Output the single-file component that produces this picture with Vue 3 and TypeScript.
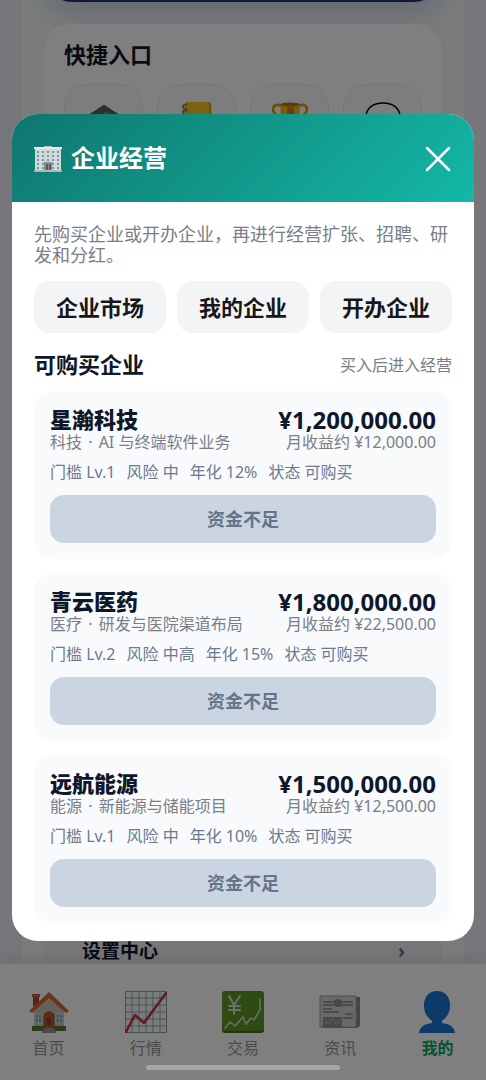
<script setup lang="ts">
import { ref } from 'vue'

interface Company {
  name: string
  sector: string
  intro: string
  price: string
  income: string
  facts: string[]
}

const companies: Company[] = [
  {
    name: '星瀚科技',
    sector: '科技',
    intro: 'AI 与终端软件业务',
    price: '¥1,200,000.00',
    income: '月收益约 ¥12,000.00',
    facts: ['门槛 Lv.1', '风险 中', '年化 12%', '状态 可购买'],
  },
  {
    name: '青云医药',
    sector: '医疗',
    intro: '研发与医院渠道布局',
    price: '¥1,800,000.00',
    income: '月收益约 ¥22,500.00',
    facts: ['门槛 Lv.2', '风险 中高', '年化 15%', '状态 可购买'],
  },
  {
    name: '远航能源',
    sector: '能源',
    intro: '新能源与储能项目',
    price: '¥1,500,000.00',
    income: '月收益约 ¥12,500.00',
    facts: ['门槛 Lv.1', '风险 中', '年化 10%', '状态 可购买'],
  },
]

const tabs = ['企业市场', '我的企业', '开办企业']
const open = ref(true)
</script>

<template>
  <div class="app">
    <main class="page">
      <section class="profile"></section>
      <section class="panel quick">
        <h2>快捷入口</h2>
        <div class="tiles">
          <button type="button" class="tile" aria-label="学院">
            <svg viewBox="0 0 40 40"><path d="M20 3 L39 15 L20 26 L1 15Z" fill="#5c5f63" /><path d="M20 11 L31 16" stroke="#8a8d90" stroke-width="1.5" /><path d="M8 20v10q12 8 24 0V20L20 27Z" fill="#484a4d" /></svg>
          </button>
          <button type="button" class="tile" aria-label="账本">
            <svg viewBox="0 0 40 40"><rect x="7" y="0" width="28" height="38" rx="3" fill="#d89a12" /><rect x="8" y="0" width="25" height="36" rx="3" fill="#fbc42a" /><g fill="none" stroke="#98761d" stroke-width="1.5"><path d="M10 3H6q-2 2 0 4h4M10 9H6q-2 2 0 4h4M10 15H6q-2 2 0 4h4" /></g></svg>
          </button>
          <button type="button" class="tile" aria-label="排行">
            <svg viewBox="0 0 40 40"><path d="M11 4C1 0 0 10 6 14l7 4M29 4c10-4 11 6 5 10l-7 4" fill="none" stroke="#e09b16" stroke-width="3" /><path d="M10 2h20v10q-1 12-10 12T10 12Z" fill="#f7b71d" /><ellipse cx="20" cy="2.500" rx="10" ry="2" fill="#b97412" /><rect x="17" y="5" width="7" height="9" fill="#c97f14" /><path d="M18 23h4v7h6v6H12v-6h6Z" fill="#c97f14" /></svg>
          </button>
          <button type="button" class="tile" aria-label="消息">
            <svg viewBox="0 0 40 40"><path d="M20 1C9 1 2 7 2 16s7 14 15 14l-2 7 10-8c8-2 13-7 13-13C38 7 31 1 20 1Z" fill="none" stroke="#000" stroke-width="1.500" /></svg>
          </button>
        </div>
      </section>
      <section class="settings">
        <a href="#settings"><span>设置中心</span><span class="chevron">›</span></a>
      </section>
    </main>

    <nav class="nav">
      <a href="#home">
        <svg viewBox="0 0 42 42"><path d="M5 5h6v10H5Z" fill="#a34d35" /><path d="M6 19 21 5 36 19v20H6Z" fill="#c9c3b4" /><path d="M21 1 1 20l3 2L21 7l17 15 3-2Z" fill="#d5652e" /><path d="M4 3h8v3H4Z" fill="#c95d31" /><path d="M7 23h7v9H7ZM28 23h7v9h-7Z" fill="#7fa9b5" stroke="#e2e2e2" /><path d="M10.500 23v9M7 27h7M31.500 23v9M28 27h7" stroke="#e2e2e2" /><path d="M16 38V26q0-5 5-5t5 5v12Z" fill="#b75b32" stroke="#8a4021" /><path d="M19 28q0-4 4 0v6h-4Z" fill="#8a4021" /><path d="M4 35h12v5H4ZM26 35h12v5H26Z" fill="#577b28" /><path d="M16 37h10v2h2v3H14v-3h2Z" fill="#9b9390" /></svg>
        <span>首页</span>
      </a>
      <a href="#market">
        <svg viewBox="0 0 42 42"><rect x="0.500" y="0.500" width="41" height="41" fill="#f6f8f8" stroke="#8aa0a2" /><path d="M7 0v42M14 0v42M21 0v42M28 0v42M35 0v42M0 7h42M0 14h42M0 21h42M0 28h42M0 35h42" stroke="#93a8aa" stroke-width="1" /><path d="M1 41 10 24l9 8L41 2" fill="none" stroke="#c92f42" stroke-width="2.500" stroke-linejoin="round" stroke-linecap="round" /></svg>
        <span>行情</span>
      </a>
      <a href="#trade">
        <svg viewBox="0 0 42 42"><rect width="42" height="42" rx="3" fill="#5f9629" /><path d="M0 38q0 4 4 4h34q4 0 4-4v-1q0 3-4 3H4q-4 0-4-3Z" fill="#416f18" /><g fill="none" stroke="#d5e5c8" stroke-linecap="round"><path d="m7 5 5 9 6-9M12 14v9M7 15h11M7 19h11" stroke-width="2" /><path d="m3 37 5-6 5 4 8-9 3 7 5-6 3 2 6-10V8" stroke-width="1.500" /></g></svg>
        <span>交易</span>
      </a>
      <a href="#news">
        <svg viewBox="0 0 42 42"><path d="M37 6h4v29l-3 2H4l-3-2Z" fill="#8b8b8b" /><path d="M1 5h36v31H1Z" fill="#d3d3d3" stroke="#a2a2a2" /><g stroke="#858585" stroke-width="1.500"><path d="M4 11h30M4 14h30M4 18h9M4 21h16M26 23h8M24 27h10" /></g><circle cx="19" cy="12" r="4" fill="#909090" /><path d="M4 26h19v10H4Z" fill="#909090" /><path d="m5 28 4 4 5-4 3 4 5-4M5 33l5-2 4 3 4-3 4 2" stroke="#b9b9b9" fill="none" /></svg>
        <span>资讯</span>
      </a>
      <a href="#mine" class="active">
        <svg viewBox="0 0 42 42"><path d="M21 0C13 0 8 6 8 14c0 8 3 12 8 16v2c-7 1-12 3-13 10h36c-1-7-6-9-13-10v-2c5-4 8-8 8-16C34 6 29 0 21 0Z" fill="#1b75d0" /></svg>
        <span>我的</span>
      </a>
    </nav>

    <div v-if="open" class="overlay">
      <section class="dialog" role="dialog" aria-modal="true" aria-labelledby="dialog-title">
        <header>
          <svg class="building" viewBox="0 0 28 28"><path d="M10 1h8v3h-8Z" fill="#a9bdbb" /><path d="M1 3h26v22H1Z" fill="#d3d8d8" /><path d="M0 2h28v2H0Z" fill="#e6eaea" /><g stroke="#6f9ba6" stroke-width="2" stroke-dasharray="2 2"><path d="M4 6v18M9 6v18M14 6v10M19 6v18M24 6v18" /></g><path d="M10 17h8v9h-8Z" fill="#8d8c91" /><path d="M12 19h2v7h-2ZM15 19h2v7h-2Z" fill="#5e5762" /><path d="M0 25h28v2H0Z" fill="#b1b9b8" /></svg>
          <h1 id="dialog-title">企业经营</h1>
          <button type="button" class="close" aria-label="关闭" @click="open = false">
            <svg viewBox="0 0 28 28"><path d="M3 3 25 25M25 3 3 25" stroke="#fff" stroke-width="2.500" stroke-linecap="round" /></svg>
          </button>
        </header>
        <div class="body">
          <p class="intro">先购买企业或开办企业，再进行经营扩张、招聘、研发和分红。</p>
          <div class="tabs">
            <button v-for="tab in tabs" :key="tab" type="button">{{ tab }}</button>
          </div>
          <div class="heading">
            <h2>可购买企业</h2>
            <span>买入后进入经营</span>
          </div>
          <div class="list">
            <article v-for="company in companies" :key="company.name" class="card">
              <div class="row">
                <h3>{{ company.name }}</h3>
                <strong>{{ company.price }}</strong>
              </div>
              <div class="row sub">
                <span>{{ company.sector }} <span class="dot">·</span> {{ company.intro }}</span>
                <span>{{ company.income }}</span>
              </div>
              <div class="facts">
                <span v-for="fact in company.facts" :key="fact">{{ fact }}</span>
              </div>
              <button type="button" disabled>资金不足</button>
            </article>
          </div>
        </div>
      </section>
    </div>
    <div class="home-bar"></div>
  </div>
</template>

<style>
body {
  margin: 0;
}
</style>

<style scoped>
* {
  box-sizing: border-box;
}
.app {
  position: relative;
  display: flex;
  flex-direction: column;
  min-height: 100vh;
  background: #eeeef6;
  font-family: 'Noto Sans', 'Noto Sans CJK SC', sans-serif;
  font-size: 16px;
  color: #0f172a;
}
h1,
h2,
h3,
p {
  margin: 0;
}
button {
  border: 0;
  padding: 0;
  font-family: inherit;
}
a {
  color: inherit;
  text-decoration: none;
}
svg {
  display: block;
}
.page {
  flex: 1;
  display: flex;
  flex-direction: column;
  margin: 0 22px;
  padding: 0 22px;
  background: #f6faf9;
  overflow: hidden;
}
.profile {
  height: 120px;
  flex: none;
  border-radius: 28px;
  margin-top: -118px;
  background: #1e3182;
  box-shadow: 0 12px 30px rgba(40, 60, 150, 0.22);
}
.panel {
  margin-top: 22px;
  padding: 15px 20px;
  border-radius: 26px;
  background: #fff;
  box-shadow: 0 4px 20px rgba(15, 23, 42, 0.04);
}
.quick {
  flex: 1;
}
.quick h2 {
  font-size: 22px;
  line-height: 30px;
}
.tiles {
  display: grid;
  grid-template-columns: repeat(4, 1fr);
  gap: 14px;
  margin-top: 15px;
}
.tile {
  display: flex;
  justify-content: center;
  padding-top: 17px;
  height: 112px;
  border: 1px solid #ededf2;
  border-radius: 24px;
  background: #fafafc;
}
.tile svg {
  width: 38px;
  height: 38px;
}
.settings {
  padding: 0 37px 0 38px;
  background: #f0f0f5;
}
.settings a {
  display: flex;
  align-items: center;
  justify-content: space-between;
  height: 24px;
  font-size: 19px;
  line-height: 24px;
  font-weight: 700;
}
.chevron {
  color: #6b7280;
}
.nav {
  position: relative;
  display: grid;
  grid-template-columns: repeat(5, 1fr);
  height: 117px;
  padding-top: 27px;
  border-top: 1px solid #e9e9e9;
  background: #fff;
  box-shadow: 0 -4px 18px rgba(15, 23, 42, 0.1);
  color: #94979c;
}
.nav a {
  display: flex;
  flex-direction: column;
  align-items: center;
  gap: 5px;
  line-height: 20px;
}
.nav svg {
  width: 42px;
  height: 42px;
}
.nav .active {
  color: #07a667;
  font-weight: 700;
}
.overlay {
  position: absolute;
  inset: 0;
  padding: 114px 12px 0;
  background: rgba(0, 0, 0, 0.5);
}
.dialog {
  border-radius: 26px;
  overflow: hidden;
  background: #fff;
}
.dialog header {
  display: flex;
  align-items: center;
  height: 88px;
  padding: 2px 22px 0;
  background: linear-gradient(135deg, #0f766e, #14b8a6);
  color: #fff;
}
.building {
  width: 28px;
  height: 28px;
  margin-right: 9px;
}
.dialog h1 {
  flex: 1;
  padding-bottom: 2px;
  font-size: 24px;
  line-height: 32px;
}
.close {
  width: 28px;
  height: 28px;
  background: none;
}
.body {
  padding: 22px 22px 18px;
}
.intro {
  font-size: 18px;
  line-height: 21px;
  color: #797e87;
}
.tabs {
  display: grid;
  grid-template-columns: repeat(3, 1fr);
  gap: 11px;
  margin-top: 15px;
}
.tabs button {
  height: 52px;
  padding-bottom: 3px;
  border-radius: 16px;
  background: #f3f4f5;
  color: #171717;
  font-size: 22px;
  font-weight: 700;
}
.heading {
  display: flex;
  align-items: center;
  justify-content: space-between;
  margin: 16px 0 10px;
  line-height: 32px;
}
.heading h2 {
  padding-bottom: 2px;
  font-size: 22px;
  line-height: 30px;
}
.heading span {
  color: #797e87;
}
.list {
  display: grid;
  gap: 14px;
}
.card {
  padding: 16px;
  border-radius: 19px;
  background: #f8fafc;
}
.row {
  display: flex;
  justify-content: space-between;
  line-height: 25px;
  white-space: nowrap;
}
.row h3 {
  font-size: 22px;
  font-weight: 900;
}
.row strong {
  font-size: 24px;
  font-weight: 700;
}
.row.sub {
  line-height: 20px;
  color: #797e87;
}
.dot {
  margin: 0 2px;
}
.facts {
  display: flex;
  flex-wrap: wrap;
  gap: 11px;
  margin: 10px 0 13px;
  line-height: 20px;
  color: #6b7a90;
}
.card button {
  display: block;
  width: 100%;
  height: 48px;
  padding-bottom: 2px;
  border-radius: 14px;
  background: #cbd5e1;
  color: #64748b;
  font-size: 18px;
  font-weight: 700;
}
.home-bar {
  position: absolute;
  bottom: 10px;
  left: 30%;
  width: 40%;
  height: 5px;
  border-radius: 3px;
  background: #a6a6a6;
}
</style>
